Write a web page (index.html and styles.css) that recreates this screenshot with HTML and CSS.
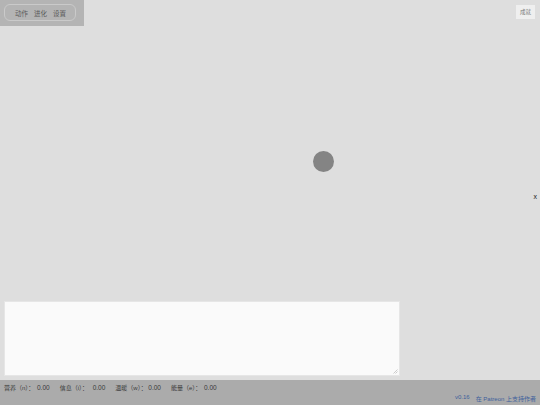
FILE: index.html
```html
<!DOCTYPE html>
<html lang="zh">
<head>
<meta charset="utf-8">
<link rel="stylesheet" href="styles.css">
</head>
<body>
<div class="app">
  <div class="top">
    <div class="menu-panel">
      <div class="menu-pill">
        <span class="tab">动作</span>
        <span class="tab">进化</span>
        <span class="tab">设置</span>
      </div>
    </div>
    <button class="ach">成就</button>
  </div>
  <div class="stage">
    <div class="cell"></div>
    <div class="close">x</div>
  </div>
  <div class="log-wrap">
    <div class="log-box">
      <textarea class="log"></textarea>
      <svg class="grip" width="5" height="5" viewBox="0 0 5 5"><path d="M4.5 0.5 L0.5 4.5 M4.5 2.5 L2.5 4.5" stroke="#b8b8b8" stroke-width="0.7" fill="none"/></svg>
    </div>
  </div>
  <div class="footer">
    <div class="stats">
      <span class="stat"><span class="lbl">营养（n）：</span><span class="val">0.00</span></span>
      <span class="stat"><span class="lbl">信息（i）：</span><span class="val">0.00</span></span>
      <span class="stat"><span class="lbl">温暖（w）：</span><span class="val">0.00</span></span>
      <span class="stat"><span class="lbl">能量（e）：</span><span class="val">0.00</span></span>
    </div>
    <div class="credits">
      <span class="ver">v0.16</span>
      <span class="patreon">在 Patreon 上支持作者</span>
    </div>
  </div>
</div>
</body>
</html>
```
FILE: styles.css
```css
html, body {
  margin: 0;
  padding: 0;
  background: #dedede;
  font-family: "Liberation Sans", Arial, "Noto Sans CJK SC", sans-serif;
}
.app {
  width: 540px;
  height: 405px;
  display: flex;
  flex-direction: column;
  overflow: hidden;
}
.top {
  display: flex;
  justify-content: space-between;
  align-items: flex-start;
  height: 26px;
}
.menu-panel {
  width: 84px;
  height: 26px;
  background: #b4b4b4;
  box-sizing: border-box;
  padding: 4px 0 0 4px;
}
.menu-pill {
  width: 72px;
  height: 17px;
  box-sizing: border-box;
  border: 1px solid #cacaca;
  border-radius: 6px;
  display: flex;
  align-items: center;
  justify-content: center;
  gap: 6px;
  padding-left: 1px;
}
.tab {
  font-size: 6.5px;
  color: #5a5a5a;
}
.ach {
  margin: 5px 5px 0 0;
  width: 19px;
  height: 14px;
  padding: 0;
  border: none;
  background: #efefef;
  color: #777;
  font-size: 5.5px;
  font-family: inherit;
}
.stage {
  flex: 1;
  position: relative;
}
.cell {
  position: absolute;
  left: 313px;
  top: 125px;
  width: 21px;
  height: 21px;
  border-radius: 50%;
  background: #848484;
}
.close {
  position: absolute;
  right: 3px;
  top: 167px;
  font-size: 7px;
  color: #222;
}
.log-wrap {
  padding: 0 0 4px 4px;
}
.log-box {
  position: relative;
  width: 396px;
  height: 75px;
}
.log {
  display: block;
  width: 100%;
  height: 100%;
  box-sizing: border-box;
  margin: 0;
  border: 1px solid #e6e6e6;
  background: #fafafa;
  resize: none;
  outline: none;
}
.grip {
  position: absolute;
  right: 2px;
  bottom: 2px;
}
.footer {
  height: 25px;
  background: #ababab;
  box-sizing: border-box;
  padding: 2px 4px 0 4px;
  display: flex;
  flex-direction: column;
}
.stats {
  display: flex;
  gap: 10px;
  font-size: 6px;
  color: #3a3a3a;
  height: 10px;
  align-items: center;
}
.stat {
  display: flex;
  align-items: center;
}
.lbl {
  width: 33px;
}
.val {
  font-size: 6.5px;
}
.credits {
  display: flex;
  justify-content: flex-end;
  gap: 6px;
  font-size: 6px;
  color: #3d5f9c;
  margin-top: 2px;
}
```
